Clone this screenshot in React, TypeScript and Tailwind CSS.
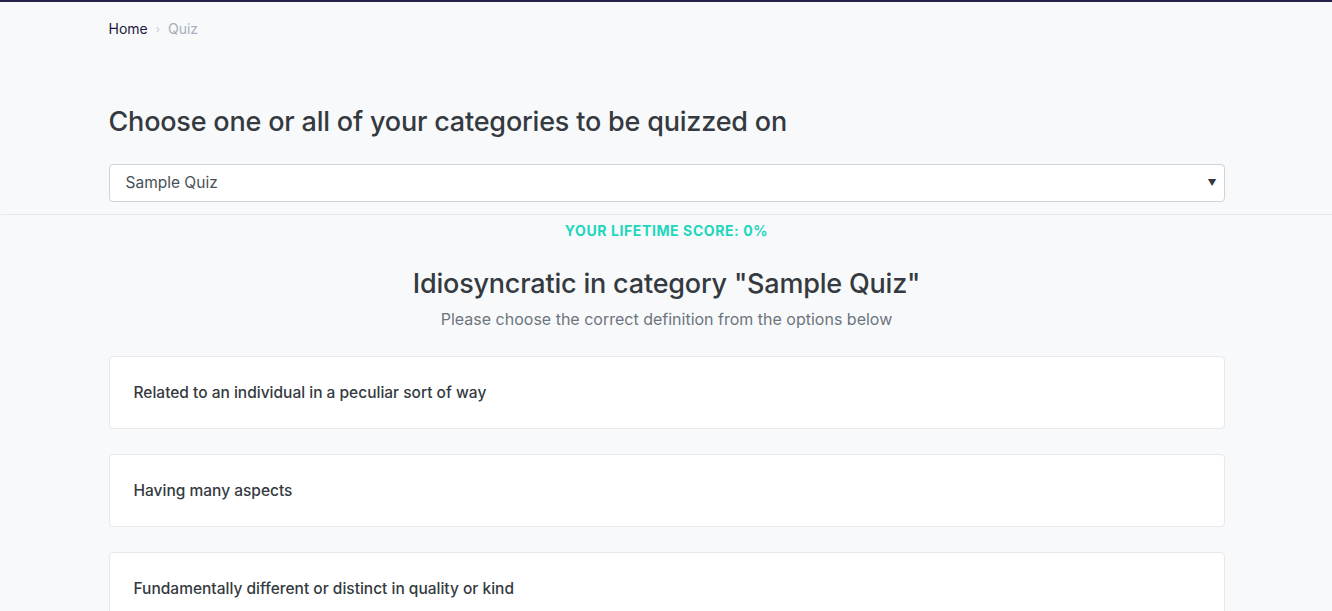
const options = [
  "Related to an individual in a peculiar sort of way",
  "Having many aspects",
  "Fundamentally different or distinct in quality or kind",
];

export default function App() {
  return (
    <div className="min-h-[611px] border-t-2 border-[#25234d] bg-[#f8f9fb] pl-px font-['Inter','Noto_Sans',sans-serif] text-[#343a40]">
      <div className="border-b border-[#e6e8eb]">
        <div className="mx-auto w-[1116px] pb-3">
          <nav className="flex items-center gap-2 pt-[17px] text-[14px] leading-5">
            <span className="text-[#1c1a3d]">Home</span>
            <span aria-hidden="true" className="text-[11px] text-[#c3c8cf]">
              ›
            </span>
            <span className="text-[#a7afba]">Quiz</span>
          </nav>
          <h1 className="mt-[67px] text-[27px] font-medium leading-8 tracking-[-0.2px] text-[#343a40]">
            Choose one or all of your categories to be quizzed on
          </h1>
          <div className="mt-[26px] flex h-[38px] items-center justify-between rounded border border-[#ced4da] bg-white pl-4 pr-[7px] text-[15.5px] text-[#495057]">
            <span>Sample Quiz</span>
            <span className="text-[9px] text-[#343a40]">▼</span>
          </div>
        </div>
      </div>

      <div className="mx-auto w-[1116px]">
        <p className="mt-[6px] text-center text-[14px] font-bold leading-5 tracking-[0.6px] text-[#1ed6bd]">
          YOUR LIFETIME SCORE: 0%
        </p>
        <h2 className="mt-[27px] text-center text-[27px] font-medium leading-8 tracking-[-0.2px] text-[#343a40]">
          Idiosyncratic in category "Sample Quiz"
        </h2>
        <p className="mt-[7px] text-center text-[16px] leading-6 text-[#6c757d]">
          Please choose the correct definition from the options below
        </p>
        <div className="mt-[25px] flex flex-col gap-[25px]">
          {options.map((o) => (
            <div
              key={o}
              className="flex h-[73px] items-center rounded border border-[#e6e8eb] bg-white px-6 text-[15.5px] font-medium text-[#343a40]"
            >
              {o}
            </div>
          ))}
        </div>
      </div>
    </div>
  );
}
